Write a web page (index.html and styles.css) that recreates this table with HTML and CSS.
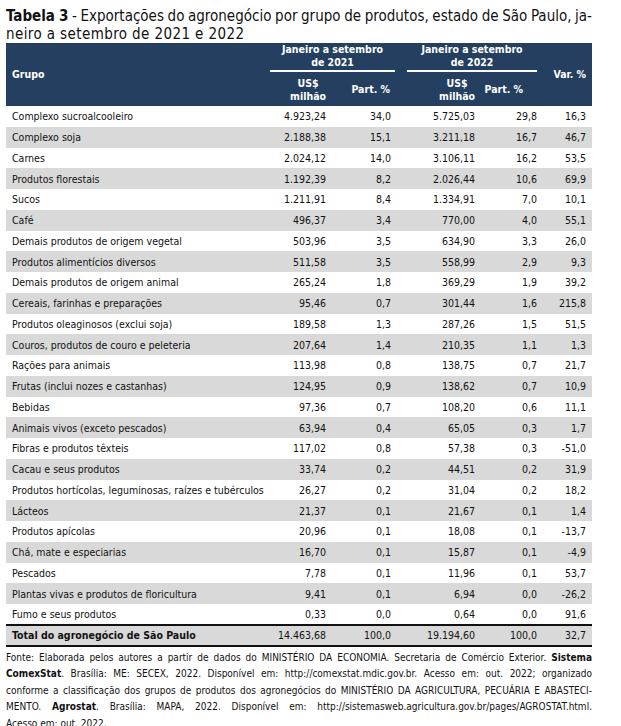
FILE: index.html
```html
<!DOCTYPE html>
<html lang="pt-BR">
<head>
<meta charset="utf-8">
<title>Tabela 3</title>
<link rel="stylesheet" href="styles.css">
</head>
<body>
<div class="page">
  <div class="title">
    <span class="title-line just"><b>Tabela 3</b> - Exportações do agronegócio por grupo de produtos, estado de São Paulo, ja-</span>
    <span class="title-line title-end">neiro a setembro de 2021 e 2022</span>
  </div>
  <table class="data">
    <colgroup>
      <col class="c-grupo"><col class="c-us1"><col class="c-p1"><col class="c-us2"><col class="c-p2"><col class="c-var">
    </colgroup>
    <thead>
      <tr class="h1">
        <th rowspan="2" class="th-grupo">Grupo</th>
        <th colspan="2" class="th-period"><div class="period p2021">Janeiro a setembro<br>de 2021</div></th>
        <th colspan="2" class="th-period"><div class="period p2022">Janeiro a setembro<br>de 2022</div></th>
        <th rowspan="2" class="th-var">Var. %</th>
      </tr>
      <tr class="h2">
        <th class="th-sub"><span class="stack">US$<br>milhão</span></th>
        <th class="th-sub th-p1">Part. %</th>
        <th class="th-sub"><span class="stack">US$<br>milhão</span></th>
        <th class="th-sub th-p2">Part. %</th>
      </tr>
    </thead>
    <tbody>
      <tr><td>Complexo sucroalcooleiro</td><td>4.923,24</td><td>34,0</td><td>5.725,03</td><td>29,8</td><td>16,3</td></tr>
      <tr><td>Complexo soja</td><td>2.188,38</td><td>15,1</td><td>3.211,18</td><td>16,7</td><td>46,7</td></tr>
      <tr><td>Carnes</td><td>2.024,12</td><td>14,0</td><td>3.106,11</td><td>16,2</td><td>53,5</td></tr>
      <tr><td>Produtos florestais</td><td>1.192,39</td><td>8,2</td><td>2.026,44</td><td>10,6</td><td>69,9</td></tr>
      <tr><td>Sucos</td><td>1.211,91</td><td>8,4</td><td>1.334,91</td><td>7,0</td><td>10,1</td></tr>
      <tr><td>Café</td><td>496,37</td><td>3,4</td><td>770,00</td><td>4,0</td><td>55,1</td></tr>
      <tr><td>Demais produtos de origem vegetal</td><td>503,96</td><td>3,5</td><td>634,90</td><td>3,3</td><td>26,0</td></tr>
      <tr><td>Produtos alimentícios diversos</td><td>511,58</td><td>3,5</td><td>558,99</td><td>2,9</td><td>9,3</td></tr>
      <tr><td>Demais produtos de origem animal</td><td>265,24</td><td>1,8</td><td>369,29</td><td>1,9</td><td>39,2</td></tr>
      <tr><td>Cereais, farinhas e preparações</td><td>95,46</td><td>0,7</td><td>301,44</td><td>1,6</td><td>215,8</td></tr>
      <tr><td>Produtos oleaginosos (exclui soja)</td><td>189,58</td><td>1,3</td><td>287,26</td><td>1,5</td><td>51,5</td></tr>
      <tr><td>Couros, produtos de couro e peleteria</td><td>207,64</td><td>1,4</td><td>210,35</td><td>1,1</td><td>1,3</td></tr>
      <tr><td>Rações para animais</td><td>113,98</td><td>0,8</td><td>138,75</td><td>0,7</td><td>21,7</td></tr>
      <tr><td>Frutas (inclui nozes e castanhas)</td><td>124,95</td><td>0,9</td><td>138,62</td><td>0,7</td><td>10,9</td></tr>
      <tr><td>Bebidas</td><td>97,36</td><td>0,7</td><td>108,20</td><td>0,6</td><td>11,1</td></tr>
      <tr><td>Animais vivos (exceto pescados)</td><td>63,94</td><td>0,4</td><td>65,05</td><td>0,3</td><td>1,7</td></tr>
      <tr><td>Fibras e produtos têxteis</td><td>117,02</td><td>0,8</td><td>57,38</td><td>0,3</td><td>-51,0</td></tr>
      <tr><td>Cacau e seus produtos</td><td>33,74</td><td>0,2</td><td>44,51</td><td>0,2</td><td>31,9</td></tr>
      <tr><td>Produtos hortícolas, leguminosas, raízes e tubérculos</td><td>26,27</td><td>0,2</td><td>31,04</td><td>0,2</td><td>18,2</td></tr>
      <tr><td>Lácteos</td><td>21,37</td><td>0,1</td><td>21,67</td><td>0,1</td><td>1,4</td></tr>
      <tr><td>Produtos apícolas</td><td>20,96</td><td>0,1</td><td>18,08</td><td>0,1</td><td>-13,7</td></tr>
      <tr><td>Chá, mate e especiarias</td><td>16,70</td><td>0,1</td><td>15,87</td><td>0,1</td><td>-4,9</td></tr>
      <tr><td>Pescados</td><td>7,78</td><td>0,1</td><td>11,96</td><td>0,1</td><td>53,7</td></tr>
      <tr><td>Plantas vivas e produtos de floricultura</td><td>9,41</td><td>0,1</td><td>6,94</td><td>0,0</td><td>-26,2</td></tr>
      <tr><td>Fumo e seus produtos</td><td>0,33</td><td>0,0</td><td>0,64</td><td>0,0</td><td>91,6</td></tr>
      <tr class="total"><td>Total do agronegócio de São Paulo</td><td>14.463,68</td><td>100,0</td><td>19.194,60</td><td>100,0</td><td>32,7</td></tr>
    </tbody>
  </table>
  <div class="source">
    <span class="src-line just">Fonte: Elaborada pelos autores a partir de dados do MINISTÉRIO DA ECONOMIA. Secretaria de Comércio Exterior. <b>Sistema</b></span>
    <span class="src-line just"><b>ComexStat</b>. Brasília: ME: SECEX, 2022. Disponível em: http://comexstat.mdic.gov.br. Acesso em: out. 2022; organizado</span>
    <span class="src-line just">conforme a classificação dos grupos de produtos dos agronegócios do MINISTÉRIO DA AGRICULTURA, PECUÁRIA E ABASTECI-</span>
    <span class="src-line just">MENTO. <b>Agrostat</b>. Brasília: MAPA, 2022. Disponível em: http://sistemasweb.agricultura.gov.br/pages/AGROSTAT.html.</span>
    <span class="src-line">Acesso em: out. 2022.</span>
  </div>
</div>
</body>
</html>
```

FILE: styles.css
```css
html, body {
  margin: 0;
  padding: 0;
  background: #ffffff;
}

body {
  font-family: "DejaVu Sans Condensed", "DejaVu Sans", sans-serif;
  font-stretch: condensed;
  color: #111111;
}

.page {
  width: 586px;
  padding: 0 6px;
}

.title {
  padding-top: 7px;
  font-size: 15px;
  line-height: 18px;
  color: #111111;
}

.title-line,
.src-line {
  display: block;
  white-space: nowrap;
}

.title-line.just {
  word-spacing: -1.5px;
}

.title-end {
  letter-spacing: 0.4px;
}

.just {
  text-align: justify;
  text-align-last: justify;
  white-space: normal;
}

.data {
  width: 586px;
  border-collapse: collapse;
  border-spacing: 0;
  table-layout: fixed;
  font-size: 10.5px;
}

.c-grupo { width: 259px; }
.c-us1 { width: 67px; }
.c-p1 { width: 65px; }
.c-us2 { width: 84px; }
.c-p2 { width: 62px; }
.c-var { width: 49px; }

thead th {
  background: #243f60;
  color: #ffffff;
  font-weight: bold;
  padding: 0;
  line-height: 12.5px;
}

.h1 { height: 28px; }
.h2 { height: 34px; }

.th-grupo {
  text-align: left;
  padding-left: 6px;
  vertical-align: middle;
}

.th-var {
  text-align: right;
  padding-right: 6px;
  vertical-align: middle;
}

.th-period {
  vertical-align: bottom;
}

.period {
  text-align: center;
  border-bottom: 2px solid #ffffff;
  padding-bottom: 2px;
}

.p2021 { margin: 0 2px 0 5px; }
.p2022 { margin: 0 6px 0 10px; }

.th-sub {
  text-align: right;
  padding-right: 6px;
  vertical-align: middle;
  padding-top: 1px;
}

.th-p1 { padding-right: 7px; }
.th-p2 { padding-right: 20px; }

.stack {
  display: inline-block;
  text-align: center;
}

tbody tr { height: 20.76px; }

tbody tr:nth-child(even) { background: #d9d9d9; }

tbody td {
  padding: 0 6px 0 0;
  text-align: right;
  white-space: nowrap;
  vertical-align: middle;
  line-height: 12px;
}

tbody td:first-child {
  text-align: left;
  padding-left: 6px;
}

.total {
  border-top: 2px solid #111111;
  border-bottom: 2px solid #111111;
}

.total td:first-child { font-weight: bold; }

.source {
  padding-top: 3px;
  font-size: 10px;
  line-height: 16.6px;
  color: #111111;
}
```
